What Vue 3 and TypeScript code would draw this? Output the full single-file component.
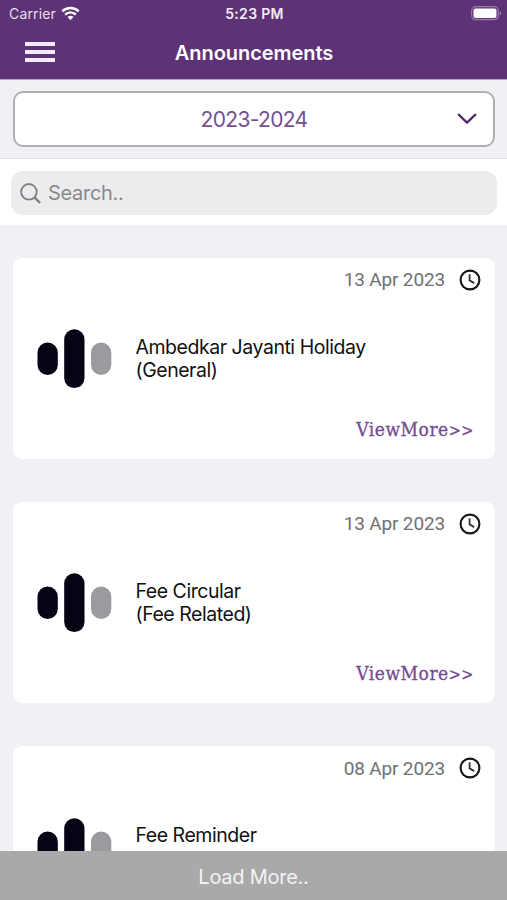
<script setup lang="ts">
interface Announcement {
  date: string
  title: string
  category?: string
}

const year = '2023-2024'
const announcements: Announcement[] = [
  { date: '13 Apr 2023', title: 'Ambedkar Jayanti Holiday', category: '(General)' },
  { date: '13 Apr 2023', title: 'Fee Circular', category: '(Fee Related)' },
  { date: '08 Apr 2023', title: 'Fee Reminder' },
]
</script>

<template>
  <div class="screen">
    <header class="header">
      <div class="status">
        <div class="carrier">
          <span class="carrier-name">Carrier</span>
          <svg class="wifi" width="19" height="15" viewBox="0 0 19 15">
            <path d="M1.3 5.3a11.7 11.7 0 0 1 16.4 0" fill="none" stroke="#fff" stroke-width="2.5" />
            <path d="M4.2 8.6a7.5 7.5 0 0 1 10.6 0" fill="none" stroke="#fff" stroke-width="2.4" />
            <path d="M9.5 14.1 6.5 11.1a4.3 4.3 0 0 1 6 0z" fill="#fff" />
          </svg>
        </div>
        <span class="time">5:23 PM</span>
        <svg class="battery" width="31" height="15" viewBox="0 0 31 15">
          <rect x=".7" y=".7" width="26.6" height="13" rx="4" fill="none" stroke="#9a7bac" stroke-width="1.2" />
          <rect x="2.5" y="2.5" width="23" height="9.4" rx="2" fill="#fff" />
          <path d="M28.6 5v4.6q1.7-.8 1.7-2.3T28.6 5z" fill="#9a7bac" />
        </svg>
      </div>
      <div class="navbar">
        <button class="menu" aria-label="Menu"><i></i><i></i><i></i></button>
        <h1 class="title">Announcements</h1>
      </div>
    </header>

    <section class="year-section">
      <button class="year-select">
        <span class="year">{{ year }}</span>
        <svg class="chevron" width="20" height="12" viewBox="0 0 20 12">
          <path d="M1.7 1.7 10 9.6l8.3-7.9" fill="none" stroke="#522a6b" stroke-width="2.3" stroke-linecap="round" stroke-linejoin="round" />
        </svg>
      </button>
    </section>

    <section class="search-section">
      <div class="search">
        <svg class="magnifier" width="22" height="22" viewBox="0 0 22 22">
          <circle cx="8.9" cy="8.8" r="7.8" fill="none" stroke="#808084" stroke-width="1.8" />
          <path d="m14.3 14.2 5.8 5.8" fill="none" stroke="#808084" stroke-width="2.4" />
        </svg>
        <span class="placeholder">Search..</span>
      </div>
    </section>

    <main class="list">
      <article v-for="(item, index) in announcements" :key="index" class="card">
        <div class="meta">
          <span class="date">{{ item.date }}</span>
          <svg width="22" height="22" viewBox="0 0 22 22">
            <circle cx="11" cy="11" r="9.4" fill="none" stroke="#171717" stroke-width="2.1" />
            <path d="M10.6 5.3v6.1l4.6 2.7" fill="none" stroke="#333" stroke-width="1.8" />
          </svg>
        </div>
        <div class="body">
          <svg class="bars" width="75" height="60" viewBox="0 0 75 60">
            <rect x=".5" y="13.5" width="20.3" height="32.4" rx="10.15" fill="#050314" />
            <rect x="27.2" y=".3" width="20.3" height="58.8" rx="10.15" fill="#050314" />
            <rect x="54" y="13.5" width="20.3" height="32.4" rx="10.15" fill="#9b9a9f" />
          </svg>
          <div class="subject">
            <div>{{ item.title }}</div>
            <div v-if="item.category">{{ item.category }}</div>
          </div>
        </div>
        <div class="footer">
          <a v-if="item.category" class="more">ViewMore<span class="arrows">&gt;&gt;</span></a>
        </div>
      </article>
    </main>

    <button class="load-more"><span>Load More..</span></button>
  </div>
</template>

<style>
body {
  margin: 0;
}
</style>

<style scoped>
.screen {
  width: 507px;
  height: 900px;
  overflow: hidden;
  display: flex;
  flex-direction: column;
  background: #f0f0f5;
  font-family: Inter, "Liberation Sans", sans-serif;
}
button {
  border: 0;
  padding: 0;
  margin: 0;
  background: none;
  font: inherit;
}
svg {
  display: block;
  flex: none;
}
.header {
  flex: none;
  box-sizing: border-box;
  height: 80px;
  background: #5e3277;
  border-bottom: 1px solid #b9a5c8;
  color: #fff;
}
.status {
  display: grid;
  grid-template-columns: 1fr auto 1fr;
  align-items: center;
  height: 27px;
  padding: 0 6px 0 9px;
}
.carrier {
  display: flex;
  align-items: center;
  gap: 5px;
}
.carrier-name {
  font-size: 14px;
  line-height: 27px;
  letter-spacing: 0.15px;
  color: #e8deee;
}
.wifi {
  margin-top: -1px;
}
.time {
  font-size: 14px;
  font-weight: 600;
  letter-spacing: 0.3px;
  margin-right: 1px;
  color: #f3edf6;
}
.battery {
  justify-self: end;
  margin-right: -1px;
}
.navbar {
  display: grid;
  grid-template-columns: 55px 1fr 55px;
  align-items: center;
  height: 50px;
}
.menu {
  display: flex;
  flex-direction: column;
  gap: 4.4px;
  width: 30px;
  margin-left: 25px;
}
.menu i {
  height: 4px;
  background: #f3e9f8;
}
.title {
  margin: 0 -1px 0 0;
  padding-top: 1px;
  text-align: center;
  font-size: 20px;
  font-weight: 600;
  letter-spacing: -0.05px;
}
.year-section {
  flex: none;
  box-sizing: border-box;
  height: 79px;
  padding: 11px 12px 12px 13px;
  border-bottom: 1px solid #e2e2e5;
}
.year-select {
  box-sizing: border-box;
  display: grid;
  grid-template-columns: 1fr auto 1fr;
  align-items: center;
  width: 482px;
  height: 56px;
  padding: 0 16px;
  border: 2px solid #afafb1;
  border-radius: 10px;
  background: #fff;
}
.year {
  grid-column: 2;
  font-size: 21px;
  letter-spacing: -0.65px;
  color: #75508f;
}
.chevron {
  justify-self: end;
}
.search-section {
  flex: none;
  box-sizing: border-box;
  height: 68px;
  padding: 12px 10px 0 11px;
  background: #fff;
  border-bottom: 1px solid #e6e6e9;
}
.search {
  display: flex;
  align-items: center;
  gap: 6px;
  height: 44px;
  padding-left: 9px;
  border-radius: 12px;
  background: #ececee;
}
.magnifier {
  margin-top: 1px;
}
.placeholder {
  font-size: 20px;
  letter-spacing: -0.3px;
  color: #88888c;
}
.list {
  flex: 1;
  min-height: 0;
  overflow: hidden;
  display: flex;
  flex-direction: column;
  gap: 42.9px;
  padding: 30.5px 12px 0 12.5px;
}
.card {
  flex: none;
  box-sizing: border-box;
  height: 201.4px;
  display: flex;
  flex-direction: column;
  border-radius: 9px;
  background: #fff;
}
.meta {
  display: flex;
  justify-content: flex-end;
  align-items: center;
  gap: 14px;
  height: 44px;
  padding-right: 14px;
}
.date {
  font-family: Roboto, sans-serif;
  font-size: 19px;
  letter-spacing: -0.15px;
  color: #707072;
}
.body {
  flex: 1;
  display: flex;
  align-items: center;
  gap: 24px;
  padding-left: 24px;
}
.subject {
  min-height: 46.6px;
  font-size: 19.5px;
  line-height: 23.3px;
  letter-spacing: -0.46px;
  color: #111;
}
.footer {
  height: 42px;
  padding-right: 21px;
  text-align: right;
  line-height: 24px;
}
.more {
  font-family: "DejaVu Serif Condensed", "DejaVu Serif", serif;
  font-size: 19px;
  letter-spacing: 0.5px;
  color: #754b91;
  -webkit-text-stroke: 0.3px #754b91;
}
.arrows {
  font-size: 16px;
  letter-spacing: 0.6px;
}
.load-more {
  flex: none;
  height: 49px;
  padding-top: 2px;
  background: #a9a9a9;
  color: #f4f4f4;
  font-size: 20px;
  letter-spacing: -0.25px;
}
</style>
